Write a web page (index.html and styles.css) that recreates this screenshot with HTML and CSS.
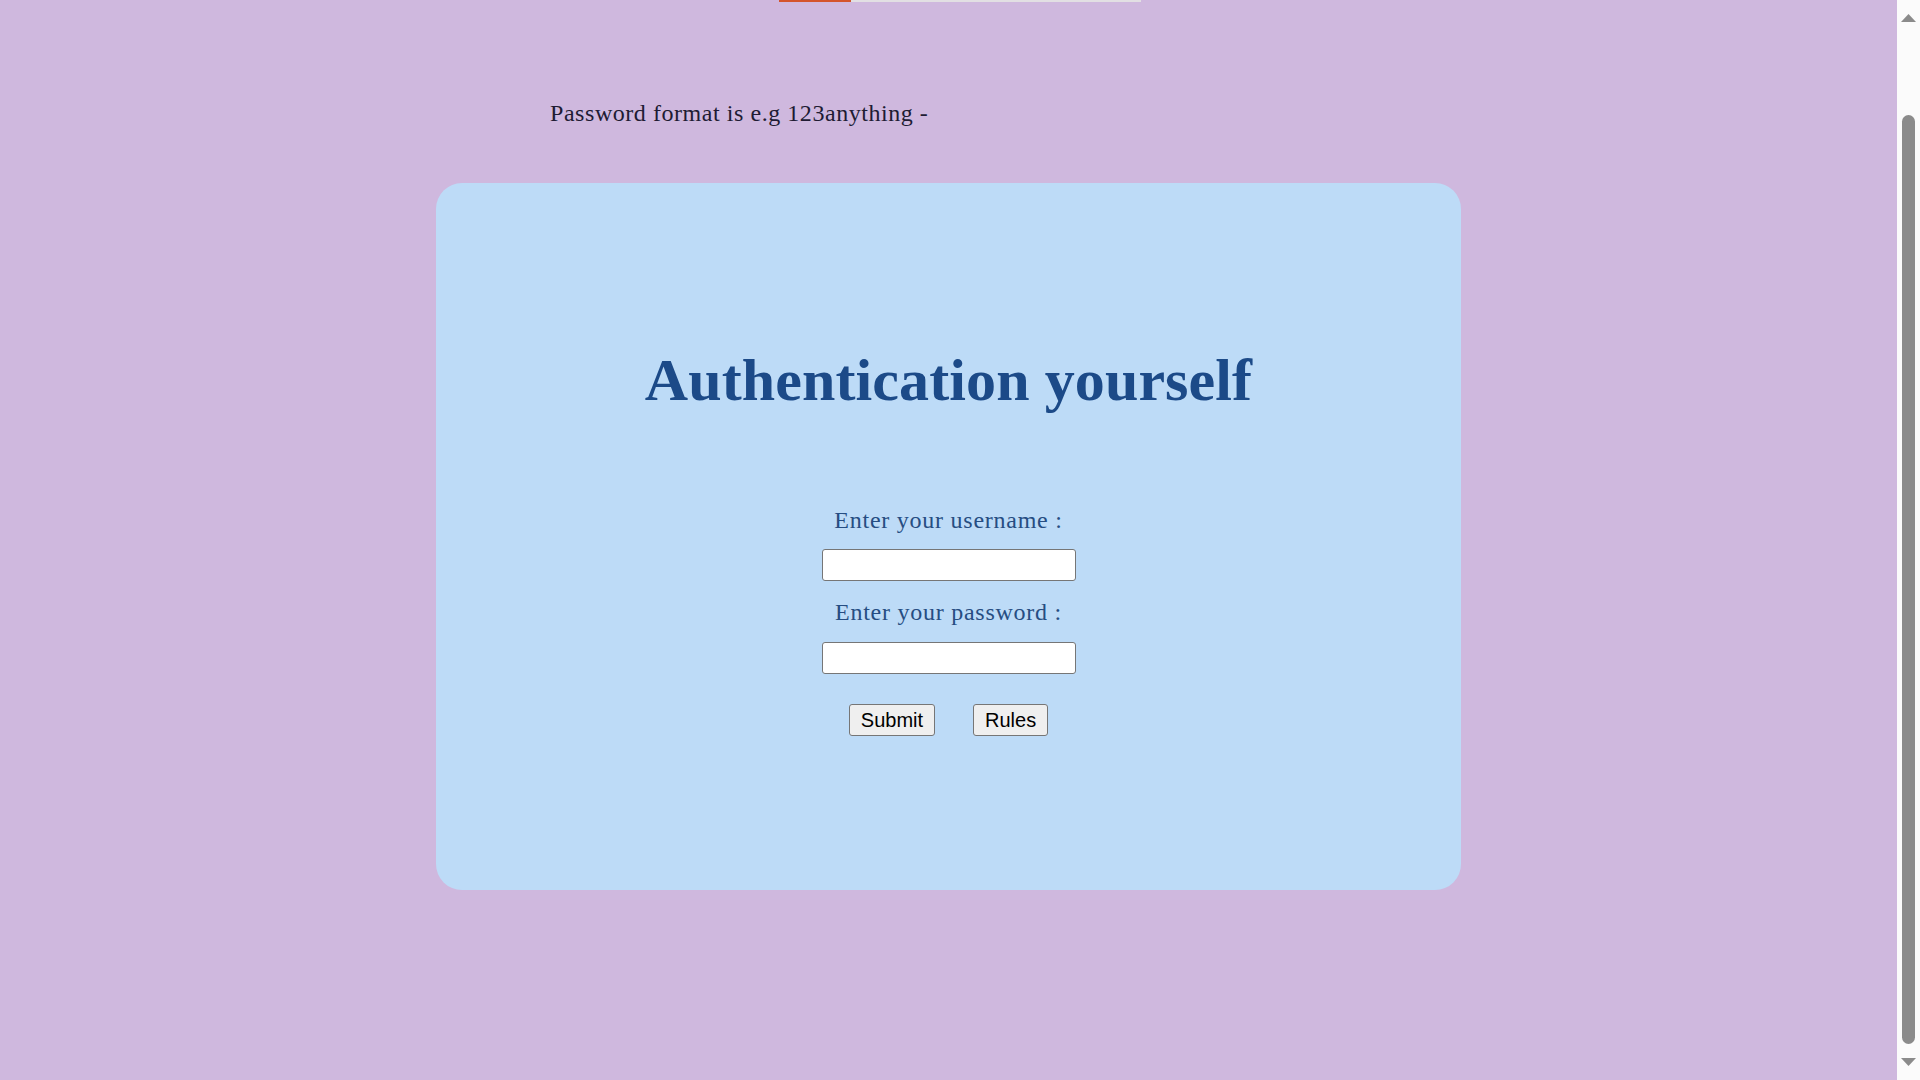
FILE: index.html
```html
<!DOCTYPE html>
<html lang="en">
<head>
<meta charset="utf-8">
<title>Authentication</title>
<link rel="stylesheet" href="styles.css">
</head>
<body>
  <div class="page">
    <div class="topbar"><div class="topbar-fill"></div></div>
    <p class="hint">Password format is e.g 123anything -</p>
    <main class="card">
      <h1 class="title">Authentication yourself</h1>
      <form class="form">
        <label class="label" for="user">Enter your username :</label>
        <input class="field field-user" id="user" type="text">
        <label class="label label-pass" for="pass">Enter your password :</label>
        <input class="field field-pass" id="pass" type="password">
        <div class="actions">
          <button class="btn" type="button">Submit</button>
          <button class="btn" type="button">Rules</button>
        </div>
      </form>
    </main>
  </div>
  <div class="scrollbar" aria-hidden="true">
    <svg class="sb-arrow sb-up" width="23" height="23" viewBox="0 0 23 23"><polygon points="4,22 11.5,14 19,22" fill="#8b8b8b"/></svg>
    <div class="sb-track"><div class="sb-thumb"></div></div>
    <svg class="sb-arrow sb-down" width="23" height="23" viewBox="0 0 23 23"><polygon points="4,1 19,1 11.5,9" fill="#8b8b8b"/></svg>
  </div>
  <script src="script.js"></script>
</body>
</html>
```

FILE: styles.css
```css
html {
  background: #cfb8de;
}

body {
  margin: 0;
  background: #cfb8de;
  font-family: "Liberation Serif", "Times New Roman", serif;
}

.page {
  width: 1897px;
  padding-bottom: 205px;
  overflow: hidden;
}

.topbar {
  display: flex;
  width: 362px;
  height: 6px;
  margin: 103px 0 0 779px;
  background: #e2dfe3;
}
.topbar-fill {
  width: 72px;
  background: #d4542c;
}

.hint {
  margin: 96px 0 0 550px;
  font-size: 24px;
  line-height: 30px;
  letter-spacing: 0.55px;
  color: #201b33;
}

.card {
  display: flex;
  flex-direction: column;
  align-items: center;
  width: 1025px;
  height: 707px;
  box-sizing: border-box;
  margin: 55px auto 0;
  padding-top: 162px;
  border-radius: 26px;
  background: #bddbf7;
}

.title {
  margin: 0;
  font-size: 60px;
  line-height: 70px;
  font-weight: bold;
  letter-spacing: 0.1px;
  color: #1c4a88;
}

.form {
  display: flex;
  flex-direction: column;
  align-items: center;
  margin-top: 90px;
}

.label {
  font-size: 24px;
  line-height: 30px;
  letter-spacing: 0.75px;
  color: #264d82;
}

.field {
  width: 254px;
  height: 32px;
  box-sizing: border-box;
  margin: 14px 0 0;
  padding: 2px 4px;
  border: 1px solid #767676;
  border-radius: 3px;
  background: #ffffff;
  font-size: 20px;
}

.label-pass {
  margin-top: 16px;
}
.field-pass {
  margin-top: 15px;
}

.actions {
  display: flex;
  gap: 38px;
  margin-top: 30px;
}

.btn {
  height: 32px;
  padding: 0 11px;
  border: 1px solid #767676;
  border-radius: 3px;
  background: #efefef;
  color: #000;
  font-family: "Liberation Sans", Arial, sans-serif;
  font-size: 20px;
}

/* overlay scrollbar drawn over the right edge */
.scrollbar {
  position: fixed;
  top: 0;
  right: 0;
  width: 23px;
  height: 100vh;
  display: flex;
  flex-direction: column;
  background: #fbfbfb;
}
.sb-arrow {
  display: block;
  flex: none;
}
.sb-track {
  flex: 1;
  padding: 92px 5px 0 5px;
}
.sb-thumb {
  height: 929px;
  border-radius: 7px;
  background: #8b8b8b;
}
```

FILE: script.js
```js
window.scrollTo(0, 107);
window.addEventListener('load', function () { window.scrollTo(0, 107); });
```
